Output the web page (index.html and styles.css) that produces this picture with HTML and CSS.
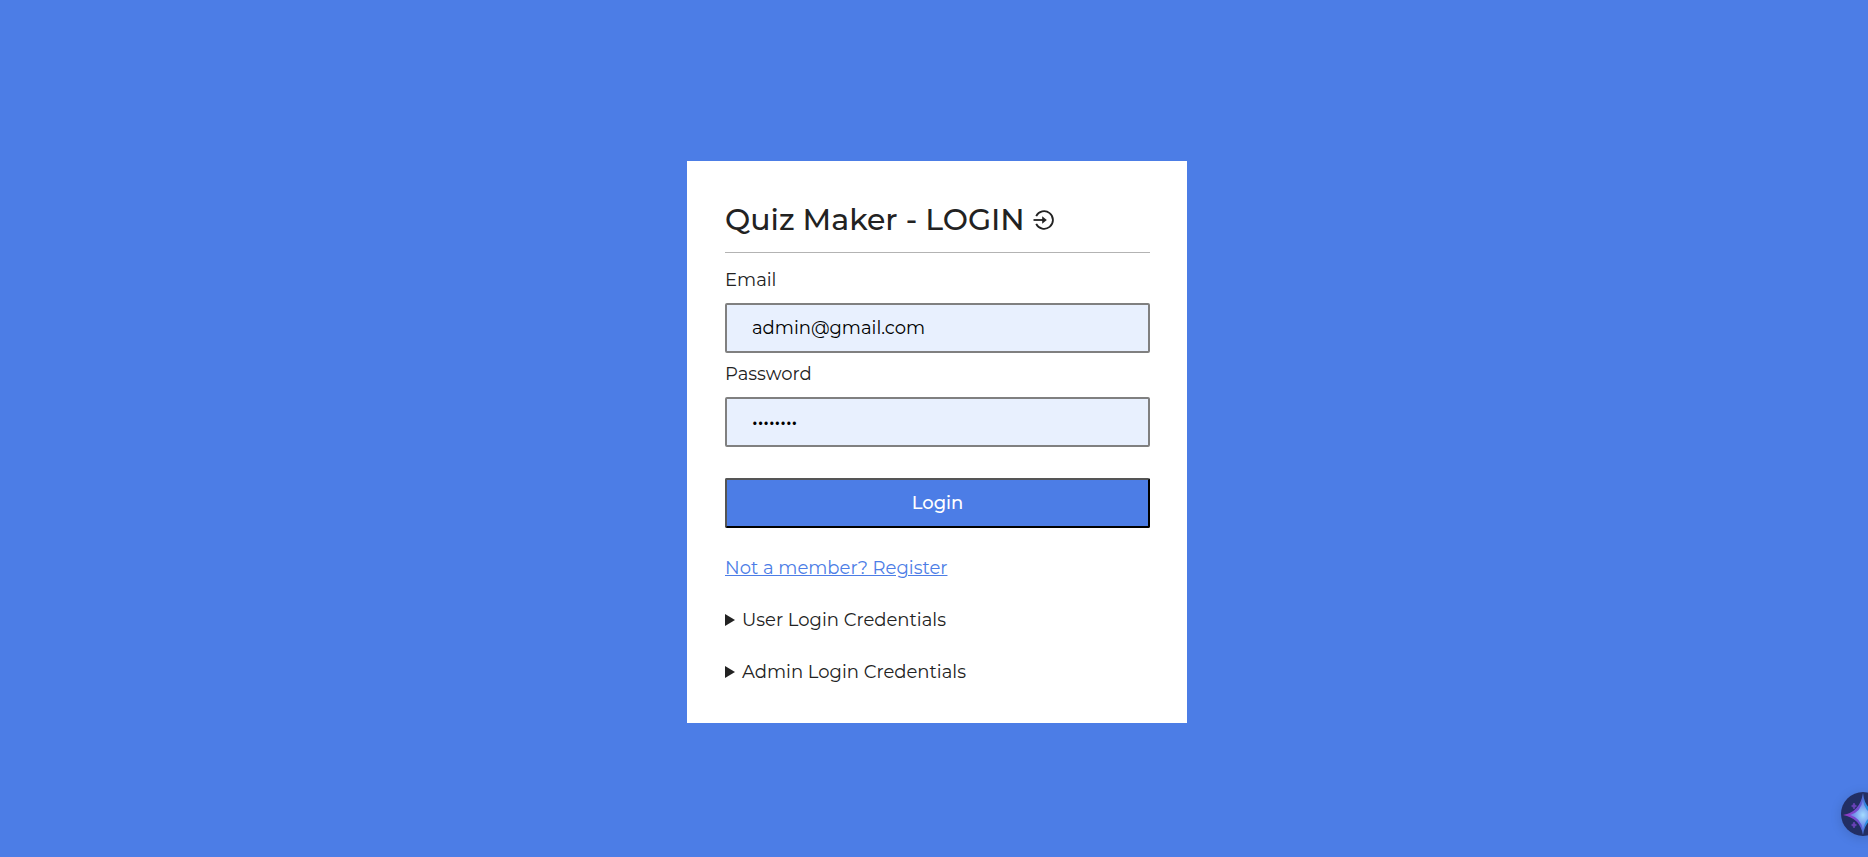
FILE: index.html
```html
<!DOCTYPE html>
<html lang="en">
<head>
<meta charset="utf-8">
<meta name="viewport" content="width=device-width, initial-scale=1">
<title>Quiz Maker - Login</title>
<link rel="stylesheet" href="styles.css">
</head>
<body>
<main class="page">
  <form class="card">
    <h1 class="title">
      <span>Quiz Maker - LOGIN</span>
      <svg class="title-icon" viewBox="0 0 22 20" aria-hidden="true">
        <path d="M3.200 6.200A8.800 8.800 0 1 1 3.200 13.800" fill="none" stroke="currentColor" stroke-width="1.800"/>
        <path d="M0.500 10H11" fill="none" stroke="currentColor" stroke-width="1.800"/>
        <path d="M9.200 6.200L13.800 10L9.200 13.800Z" fill="currentColor"/>
      </svg>
    </h1>
    <label class="label" for="email">Email</label>
    <input class="field" id="email" type="email" value="admin@gmail.com">
    <label class="label label-next" for="password">Password</label>
    <input class="field field-password" id="password" type="password" value="password">
    <button class="submit" type="button">Login</button>
    <div class="links">
      <a class="register" href="#register">Not a member? Register</a>
      <details class="credentials">
        <summary class="summary">User Login Credentials</summary>
      </details>
      <details class="credentials">
        <summary class="summary">Admin Login Credentials</summary>
      </details>
    </div>
  </form>
</main>
<button class="assistant" type="button" aria-label="Assistant">
  <svg class="assistant-icon" viewBox="0 0 44 44" aria-hidden="true">
    <defs>
      <linearGradient id="star" x1="0" y1="0" x2="1" y2="0">
        <stop offset="0" stop-color="#9a35c4"/>
        <stop offset="0.42" stop-color="#6a50d0"/>
        <stop offset="0.58" stop-color="#2b8fe0"/>
        <stop offset="1" stop-color="#28b4f0"/>
      </linearGradient>
      <radialGradient id="core">
        <stop offset="0" stop-color="#a5dcff"/>
        <stop offset="0.5" stop-color="#7ea6f0"/>
        <stop offset="1" stop-color="#6a6fe0"/>
      </radialGradient>
    </defs>
    <circle cx="22" cy="22" r="22" fill="#222e63"/>
    <path d="M22 1Q24 20 42 23Q24 26 22 43Q19 26 2 23Q19 20 22 1Z" fill="url(#star)"/>
    <path d="M22 8Q23 20 35 23Q24 25 22 38Q20 26 9 23Q20 20 22 8Z" fill="url(#core)"/>
    <path d="M13 11Q13.500 13.500 15.500 14Q13.500 14.500 13 17Q12.500 14.500 10.500 14Q12.500 13.500 13 11ZM13 30Q13.500 32.500 15.500 33Q13.500 33.500 13 36Q12.500 33.500 10.500 33Q12.500 32.500 13 30Z" fill="#6a42b8" stroke="#6a42b8" stroke-width="0.800"/>
  </svg>
</button>
</body>
</html>
```
FILE: styles.css
```css
* {
  box-sizing: border-box;
}

body {
  margin: 0;
  overflow: hidden;
  background: #4c7de6;
  color: #222;
  font-family: Montserrat, Inter, "Liberation Sans", sans-serif;
  font-size: 18px;
  line-height: 24px;
}

.page {
  display: flex;
  align-items: center;
  justify-content: center;
  min-height: 100vh;
  padding: 27px 0 0 6px;
}

.card {
  display: flex;
  flex-direction: column;
  width: 500px;
  max-width: 100%;
  padding: 39px 37px 39px 38px;
  background: #fff;
}

.title {
  display: flex;
  align-items: center;
  gap: 8px;
  margin: 0 0 17px;
  padding-bottom: 12px;
  border-bottom: 1px solid #b3b3b3;
  font-size: 30px;
  font-weight: 500;
  line-height: 40px;
}

.title-icon {
  width: 22px;
  height: 20px;
}

.label {
  margin-bottom: 13px;
  line-height: 20px;
}

.label-next {
  margin-top: 11px;
}

.field {
  height: 50px;
  padding: 0 25px;
  border: 2px solid #808080;
  border-radius: 2px;
  background: #e8f0fe;
  color: #000;
  font: inherit;
}

.field-password {
  font-weight: 500;
}

.submit {
  height: 50px;
  margin-top: 31px;
  border: 2px solid;
  border-color: #555 #000 #000 #555;
  border-radius: 2px;
  background: #4c7de6;
  color: #fff;
  font: inherit;
  font-weight: 500;
}

.links {
  display: flex;
  flex-direction: column;
  align-items: flex-start;
  gap: 28px;
  margin-top: 28px;
}

.register {
  color: #4c7de6;
}

.summary {
  display: flex;
  align-items: center;
  gap: 7px;
  list-style: none;
  cursor: pointer;
}

.summary::before {
  content: "";
  width: 10px;
  height: 12px;
  background: currentColor;
  clip-path: polygon(0 0, 100% 50%, 0 100%);
}

.assistant {
  position: fixed;
  right: -17px;
  bottom: 21px;
  width: 44px;
  height: 44px;
  padding: 0;
  border: 0;
  border-radius: 50%;
  background: none;
  box-shadow: 0 2px 12px rgba(0, 0, 0, 0.15);
}

.assistant-icon {
  display: block;
  width: 44px;
  height: 44px;
}
```
